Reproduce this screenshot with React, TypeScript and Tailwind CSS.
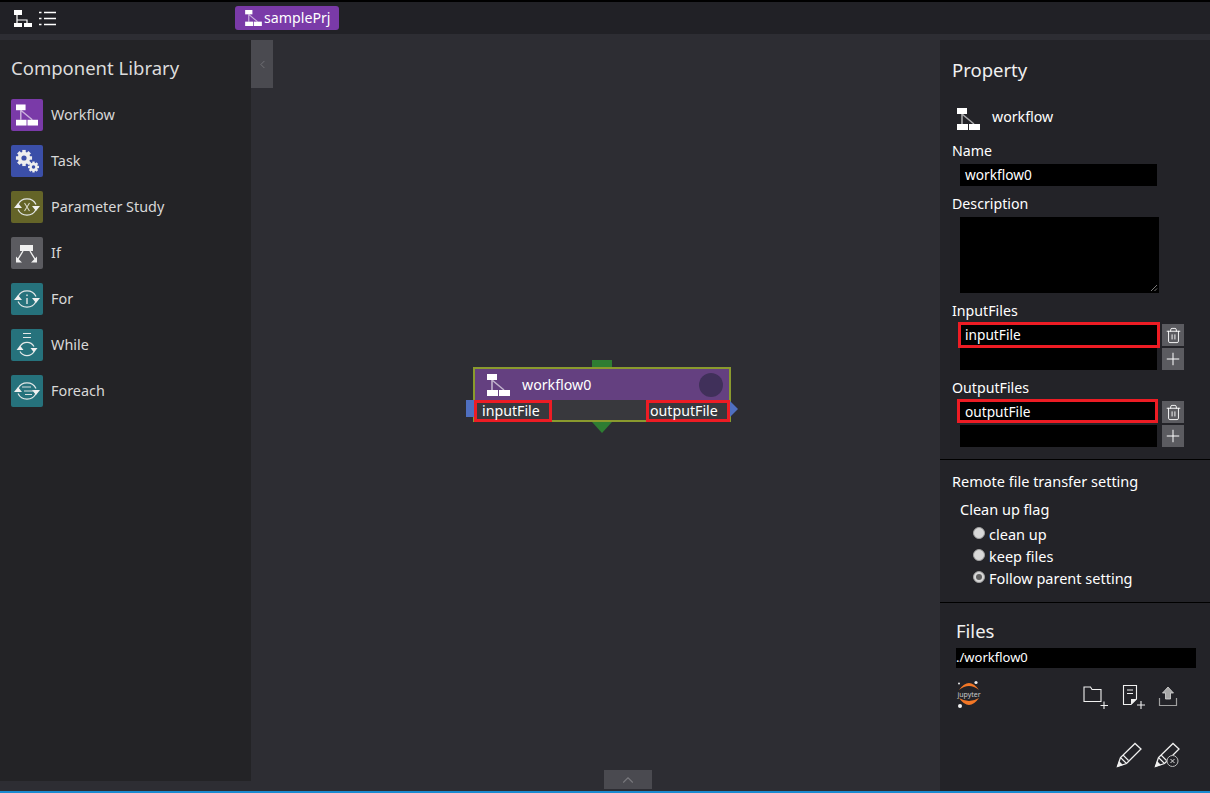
import { Trash2, Plus, ChevronLeft, ChevronUp } from "lucide-react";

const font = "font-['Noto_Sans','Open_Sans',sans-serif]";

function WorkflowIcon({ className }: { className?: string }) {
  return (
    <svg viewBox="0 0 23 22" className={className}>
      <path d="M5 6V16M5 6L17 16" stroke="#ffffff" strokeOpacity="0.6" strokeWidth="1.6" fill="none" />
      <rect x="0" y="0" width="10" height="6" fill="#fff" />
      <rect x="0" y="16" width="11" height="6" fill="#fff" />
      <rect x="12" y="16" width="11" height="6" fill="#fff" />
    </svg>
  );
}

function Gear({ cx, cy, r }: { cx: number; cy: number; r: number }) {
  const teeth = [0, 45, 90, 135];
  return (
    <g>
      {teeth.map((a) => (
        <rect key={a} x={cx - r * 0.28} y={cy - r * 1.3} width={r * 0.56} height={r * 2.6} fill="#eee" transform={`rotate(${a} ${cx} ${cy})`} />
      ))}
      <circle cx={cx} cy={cy} r={r} fill="#eee" />
      <circle cx={cx} cy={cy} r={r * 0.42} fill="#3b4fa8" />
    </g>
  );
}

function LoopArrows({ children }: { children?: React.ReactNode }) {
  return (
    <svg viewBox="0 0 32 32" className="w-8 h-8">
      <path d="M7 13.500A10 10 0 0 1 25 13.500M25 18.500A10 10 0 0 1 7 18.500" stroke="#e4e8e8" strokeWidth="1.2" fill="none" />
      <path d="M3 17L7 12L11 17ZM21 15L25 20L29 15Z" fill="#f0f0f0" />
      {children}
    </svg>
  );
}

const library = [
  {
    name: "Workflow",
    bg: "bg-[#7a3aa8]",
    icon: <WorkflowIcon className="w-[22px] h-[22px]" />,
  },
  {
    name: "Task",
    bg: "bg-[#3b4fa8]",
    icon: (
      <svg viewBox="0 0 32 32" className="w-8 h-8">
        <Gear cx={13} cy={13} r={6.2} />
        <Gear cx={22.500} cy={22} r={4.2} />
      </svg>
    ),
  },
  {
    name: "Parameter Study",
    bg: "bg-[#646428]",
    icon: (
      <LoopArrows>
        <path d="M13.500 12L18.500 20M18.500 12L13.500 20" stroke="#d8d8c8" strokeWidth="1.1" />
      </LoopArrows>
    ),
  },
  {
    name: "If",
    bg: "bg-[#5b5b60]",
    icon: (
      <svg viewBox="0 0 32 32" className="w-8 h-8">
        <rect x="9" y="8" width="13" height="6" fill="#f0f0f0" />
        <path d="M12 14L6.500 23M19 14L24.500 23" stroke="#f0f0f0" strokeWidth="1.4" />
        <path d="M5 19.500V25.500H11ZM26 19.500V25.500H20Z" fill="#f0f0f0" />
      </svg>
    ),
  },
  {
    name: "For",
    bg: "bg-[#26727c]",
    icon: (
      <LoopArrows>
        <path d="M16 15V21" stroke="#e4e8e8" strokeWidth="1.4" />
        <rect x="15.300" y="11.500" width="1.400" height="1.600" fill="#e4e8e8" />
      </LoopArrows>
    ),
  },
  {
    name: "While",
    bg: "bg-[#26727c]",
    icon: (
      <svg viewBox="0 0 32 32" className="w-8 h-8">
        <path d="M12 4.500H20M12 8.500H20" stroke="#e4e8e8" strokeWidth="1.2" />
        <path d="M9 17.500A8 8 0 0 1 23 17.500M23 22.500A8 8 0 0 1 9 22.500" stroke="#e4e8e8" strokeWidth="1.2" fill="none" />
        <path d="M5.500 21L9 16.500L12.500 21ZM19.500 19L23 23.500L26.500 19Z" fill="#f0f0f0" />
      </svg>
    ),
  },
  {
    name: "Foreach",
    bg: "bg-[#26727c]",
    icon: (
      <LoopArrows>
        <path d="M11 12H20M13 16H23M14 19.500H21" stroke="#d8dede" strokeWidth="1.1" />
      </LoopArrows>
    ),
  },
];

function SquareButton({ children }: { children: React.ReactNode }) {
  return <div className="w-[22px] h-[22px] bg-[#5b5b60] flex items-center justify-center text-white">{children}</div>;
}

function FileListEditor({ value, redClass }: { value: string; redClass: string }) {
  return (
    <div className="flex flex-col gap-[2px]">
      <div className="flex items-center h-[22px] relative">
        <div className={`absolute border-[3px] border-[#ed1c24] ${redClass}`} />
        <div className="ml-5 w-[197px] h-[22px] bg-black text-white text-[13.700px] leading-[21px] pl-[5px] relative">{value}</div>
        <div className="ml-[5px]">
          <SquareButton>
            <Trash2 size={17} strokeWidth={1.3} />
          </SquareButton>
        </div>
      </div>
      <div className="flex items-center h-[22px]">
        <div className="ml-5 w-[197px] h-[22px] bg-black" />
        <div className="ml-[5px]">
          <SquareButton>
            <Plus size={20} strokeWidth={1.2} />
          </SquareButton>
        </div>
      </div>
    </div>
  );
}

function Radio({ label, checked }: { label: string; checked?: boolean }) {
  return (
    <div className="flex items-center h-[22px] pl-[33px] text-[14.500px] text-white">
      <span className="w-3 h-3 rounded-full bg-[#d8d8d8] border border-[#a0a0a0] flex items-center justify-center mr-[4px] -mt-[5px]">
        {checked && <span className="w-[6px] h-[6px] rounded-full bg-[#606060]" />}
      </span>
      {label}
    </div>
  );
}

export default function App() {
  return (
    <div className={`w-[1210px] h-[793px] overflow-hidden flex flex-col bg-[#2d2d33] ${font}`}>
      {/* Header */}
      <header className="h-[34px] shrink-0 border-t-2 border-black bg-[#212126] flex items-center">
        <svg viewBox="0 0 18 17" className="w-[18px] h-[17px] ml-[14px]">
          <path d="M3 5V15M3 10H13V13" stroke="#fff" strokeWidth="1.2" fill="none" />
          <rect x="0" y="0" width="8" height="5" fill="#fff" />
          <rect x="0" y="13" width="8" height="4" fill="#fff" />
          <rect x="10" y="13" width="8" height="4" fill="#fff" />
        </svg>
        <svg viewBox="0 0 17 15" className="w-[17px] h-[15px] ml-[7px]">
          <path d="M0 1.500H2.500M5 1.500H17M0 7.500H2.500M5 7.500H17M0 13.500H2.500M5 13.500H17" stroke="#fff" strokeWidth="1.700" />
        </svg>
        <div className="ml-[179px] w-[104px] h-6 rounded-[3px] bg-[#7a3aa8] flex items-center pl-[10px] gap-[2px] text-white text-[14.200px]">
          <WorkflowIcon className="w-[17px] h-[16px]" />
          samplePrj
        </div>
      </header>

      <div className="flex flex-1 mt-[6px] min-h-0">
        {/* Component Library */}
        <aside className="w-[251px] h-[741px] shrink-0 bg-[#232326] pt-[14px] pl-[11px]">
          <h2 className="text-[18.500px] leading-[28px] text-[#dcdcdc]">Component Library</h2>
          <ul className="mt-[17px] flex flex-col gap-[14px]">
            {library.map((item) => (
              <li key={item.name} className="flex items-center h-8 gap-2 text-[14.400px] text-[#d8d8d8]">
                <span className={`w-8 h-8 rounded-[2px] flex items-center justify-center ${item.bg}`}>{item.icon}</span>
                <span>{item.name}</span>
              </li>
            ))}
          </ul>
        </aside>

        {/* Canvas */}
        <main className="relative flex-1">
          <div className="absolute left-0 top-0 w-[22px] h-12 bg-[#4a4a50] flex items-center justify-center text-[#77777c]">
            <ChevronLeft size={13} strokeWidth={1.5} />
          </div>

          <div className="absolute left-[222px] top-[327px] w-[258px] h-[55px] border-2 border-[#8a9a2e] text-white">
            <div className="absolute left-[117px] -top-[9px] w-5 h-[7px] bg-[#2e7d32]" />
            <div className="absolute left-[117px] -bottom-[13px] w-0 h-0 border-x-[10px] border-x-transparent border-t-[11px] border-t-[#2e7d32]" />
            <div className="absolute -left-[9px] top-[31px] w-2 h-[17px] bg-[#4f6fc0]" />
            <div className="absolute -right-[9px] top-[32px] w-0 h-0 border-y-[8px] border-y-transparent border-l-[8px] border-l-[#4f6fc0]" />
            <div className="h-[31px] bg-[#644080] flex items-center pl-3 text-[14.200px]">
              <WorkflowIcon className="w-[23px] h-[22px]" />
              <span className="ml-3">workflow0</span>
              <span className="ml-auto mr-[6px] w-6 h-6 rounded-full bg-[#40305a]" />
            </div>
            <div className="h-[20px] bg-[#38383d] flex justify-between text-[14.200px] leading-[15px]">
              <div className="-ml-[1px] w-[78px] h-[22px] border-[3px] border-[#ed1c24] pl-[5px] bg-[#38383d]">inputFile</div>
              <div className="-mr-[1px] w-[84px] h-[22px] border-[3px] border-[#ed1c24] pl-[1px] bg-[#38383d]">outputFile</div>
            </div>
          </div>

          <div className="absolute left-[353px] bottom-[2px] w-12 h-[19px] bg-[#4a4a50] flex items-center justify-center text-[#77777c]">
            <ChevronUp size={18} strokeWidth={1.5} />
          </div>
        </main>

        {/* Property panel */}
        <aside className="w-[270px] h-[751px] shrink-0 bg-[#232328] text-white">
          <div className="h-[420px] border-b border-black pl-3 pt-[16px]">
            <h2 className="text-[18.500px] leading-[28px] text-[#f0f0f0]">Property</h2>
            <div className="mt-[21px] h-6 flex items-center text-[14.200px]">
              <WorkflowIcon className="w-[23px] h-[22px] ml-[5px] mt-[4px]" />
              <span className="ml-[12px]">workflow</span>
            </div>
            <div className="mt-3 text-[14.200px] leading-[20px]">Name</div>
            <div className="mt-[3px] ml-2 w-[197px] h-[22px] bg-black text-[13.700px] leading-[21px] pl-[5px]">workflow0</div>
            <div className="mt-2 text-[14.200px] leading-[20px]">Description</div>
            <div className="mt-[3px] ml-2 w-[199px] h-[76px] bg-black relative">
              <svg viewBox="0 0 8 8" className="absolute right-[1px] bottom-[1px] w-2 h-2">
                <path d="M1 7L7 1M4.500 7L7 4.500" stroke="#9a9a9a" strokeWidth="0.8" />
              </svg>
            </div>
            <div className="mt-[8px] text-[14.200px] leading-[20px]">InputFiles</div>
            <div className="-ml-3 mt-[3px]">
              <FileListEditor value="inputFile" redClass="left-[18px] -top-[2px] w-[202px] h-[26px] z-10" />
            </div>
            <div className="mt-[8px] text-[14.200px] leading-[20px]">OutputFiles</div>
            <div className="-ml-3 mt-[3px]">
              <FileListEditor value="outputFile" redClass="left-[17px] -top-[2px] w-[201px] h-6 z-10" />
            </div>
          </div>

          <div className="h-[143px] border-b border-black pl-3 pt-[11px]">
            <div className="text-[14.500px] leading-[20px]">Remote file transfer setting</div>
            <div className="mt-2 ml-2 text-[14.500px] leading-[20px]">Clean up flag</div>
            <div className="mt-[5px] -ml-3">
              <Radio label="clean up" />
              <Radio label="keep files" />
              <Radio label="Follow parent setting" checked />
            </div>
          </div>

          <div className="pl-4 pt-[14px]">
            <h2 className="text-[18.500px] leading-[28px] text-[#f0f0f0]">Files</h2>
            <div className="mt-[3px] w-[240px] h-5 bg-black text-[13px] leading-[18px]">./workflow0</div>
            <div className="mt-[12px] flex items-start">
              <svg viewBox="0 0 26 28" className="w-[26px] h-[28px]">
                <path d="M3 10Q13 -4 23 10Q13 2 3 10Z" fill="#f37726" />
                <path d="M3 18Q13 32 23 18Q13 24 3 18Z" fill="#f37726" />
                <circle cx="20" cy="2.500" r="1.600" fill="#e8e8e8" />
                <circle cx="3" cy="3.500" r="1" fill="#e8e8e8" />
                <circle cx="4" cy="26" r="2" fill="#f0f0f0" />
                <text x="13" y="16.500" textAnchor="middle" fontSize="7" fill="#c8c8c8" fontFamily="'Noto Sans',sans-serif">jupyter</text>
              </svg>
              <div className="ml-[101px] mt-1 w-[26px]">
                <svg viewBox="0 0 26 26" className="w-[26px] h-[26px]">
                  <path d="M1 5V17.500H18V5.500H9L7.500 3H1Z" stroke="#f0f0f0" strokeWidth="1.100" fill="none" />
                  <path d="M21 17.500V25M17.500 21.500H25" stroke="#f0f0f0" strokeWidth="1.100" />
                </svg>
              </div>
              <div className="ml-[13px] mt-1 w-[26px]">
                <svg viewBox="0 0 26 28" className="w-[26px] h-[28px]">
                  <path d="M1.500 1.500H14.500V15L9 20.500H1.500Z" stroke="#f0f0f0" strokeWidth="1.100" fill="none" />
                  <path d="M9 20.500V15H14.500Z" fill="#f0f0f0" />
                  <path d="M5 6H11M5 9.500H11" stroke="#f0f0f0" strokeWidth="1.100" />
                  <path d="M19 17V25M15 21H23" stroke="#f0f0f0" strokeWidth="1.100" />
                </svg>
              </div>
              <div className="ml-[10px] mt-[5px]">
                <svg viewBox="0 0 20 22" className="w-5 h-[22px]">
                  <path d="M10 2L15.500 8H12.500V14H7.500V8H4.500Z" fill="#a8a8a8" stroke="#d8d8d8" strokeWidth="0.800" />
                  <path d="M1.500 13V20.500H18.500V13" stroke="#a0a0a0" strokeWidth="1.200" fill="none" />
                </svg>
              </div>
            </div>
            <div className="mt-[30px] ml-[160px] flex gap-[12px]">
              <svg viewBox="0 0 26 26" className="w-[26px] h-[26px]">
                <path d="M1.500 24.500L4.500 15.500L19 1.500L25 7L10.500 21.500Z" stroke="#f0f0f0" strokeWidth="1.300" fill="none" />
                <path d="M4.500 15.500L10.500 21.500M7 13L12.500 18.500" stroke="#f0f0f0" strokeWidth="1.100" />
                <path d="M1 25L3 19L7 23Z" fill="#f0f0f0" />
              </svg>
              <svg viewBox="0 0 26 26" className="w-[26px] h-[26px]">
                <path d="M1.500 24.500L4.500 15.500L19 1.500L25 7L17 15L10.500 21.500Z" stroke="#f0f0f0" strokeWidth="1.300" fill="none" />
                <path d="M4.500 15.500L10.500 21.500M7 13L12.500 18.500" stroke="#f0f0f0" strokeWidth="1.100" />
                <path d="M1 25L3 19L7 23Z" fill="#f0f0f0" />
                <circle cx="18.500" cy="19" r="5.500" fill="#232328" stroke="#bbb" strokeWidth="1" />
                <path d="M16.500 17L20.500 21M20.500 17L16.500 21" stroke="#ddd" strokeWidth="1" />
              </svg>
            </div>
          </div>
        </aside>
      </div>
      <div className="h-[2px] shrink-0 bg-[#1a8ad0]" />
    </div>
  );
}
